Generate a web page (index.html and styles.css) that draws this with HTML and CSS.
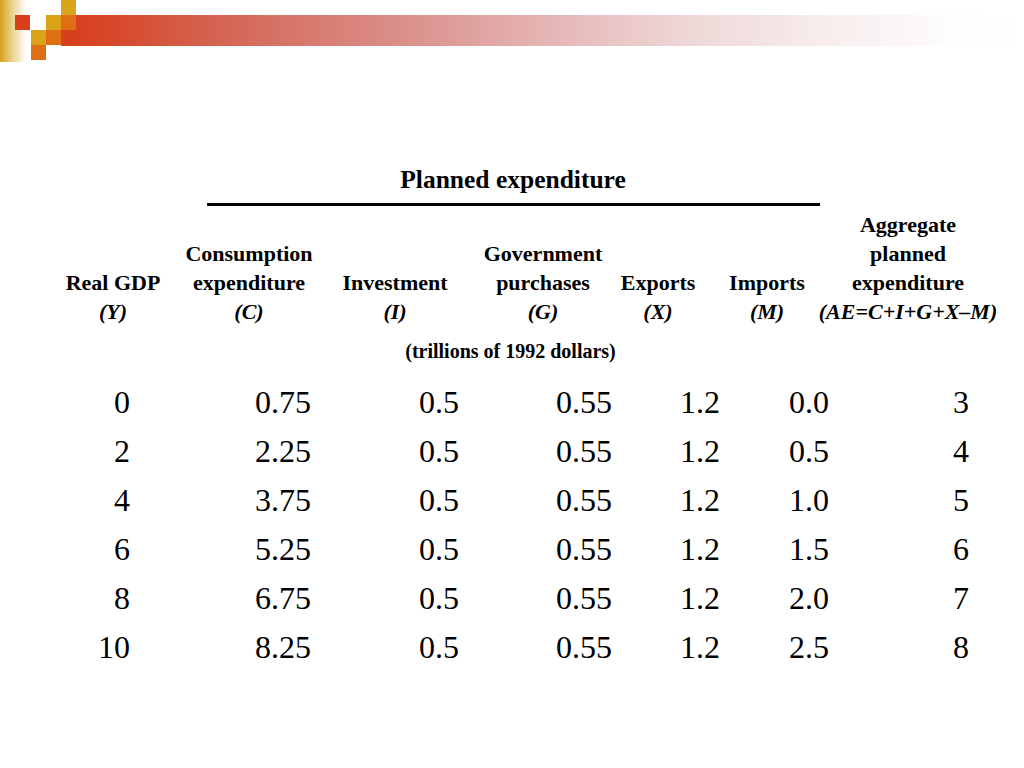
FILE: index.html
```html
<!DOCTYPE html>
<html lang="en">
<head>
<meta charset="utf-8">
<title>Planned expenditure</title>
<link rel="stylesheet" href="styles.css">
</head>
<body>
<header class="deco">
  <svg class="logo" width="76" height="62" viewBox="0 0 76 62" aria-hidden="true">
    <defs>
      <linearGradient id="goldfade" x1="0" y1="0" x2="1" y2="0">
        <stop offset="0" stop-color="#d6a01c"/>
        <stop offset="0.45" stop-color="#e9cf8a"/>
        <stop offset="1" stop-color="#ffffff"/>
      </linearGradient>
    </defs>
    <rect x="0" y="0" width="26" height="62" fill="url(#goldfade)"/>
    <rect x="15" y="15" width="15" height="15" fill="#d8401c"/>
    <rect x="61" y="0" width="15" height="15" fill="#d9a31a"/>
    <rect x="46" y="15" width="15" height="15" fill="#d9a31a"/>
    <rect x="61" y="15" width="15" height="15" fill="#e06e14"/>
    <rect x="31" y="30" width="15" height="15" fill="#d9a31a"/>
    <rect x="46" y="30" width="15" height="15" fill="#e06e14"/>
    <rect x="61" y="30" width="15" height="16" fill="#d6401e"/>
    <rect x="31" y="45" width="15" height="15" fill="#e06e14"/>
  </svg>
  <div class="band"></div>
</header>

<main class="slide">
  <div class="title">Planned expenditure</div>
  <div class="rule"></div>

  <div class="heads">
    <div class="hcell"><span>Real GDP</span><span class="sym">(Y)</span></div>
    <div class="hcell"><span>Consumption</span><span>expenditure</span><span class="sym">(C)</span></div>
    <div class="hcell"><span>Investment</span><span class="sym">(I)</span></div>
    <div class="hcell"><span>Government</span><span>purchases</span><span class="sym">(G)</span></div>
    <div class="hcell"><span>Exports</span><span class="sym">(X)</span></div>
    <div class="hcell"><span>Imports</span><span class="sym">(M)</span></div>
    <div class="hcell"><span>Aggregate</span><span>planned</span><span>expenditure</span><span class="sym">(AE=C+I+G+X–M)</span></div>
  </div>

  <div class="units">(trillions of 1992 dollars)</div>

  <div class="nums">
    <span>0</span><span>0.75</span><span>0.5</span><span>0.55</span><span>1.2</span><span>0.0</span><span>3</span>
    <span>2</span><span>2.25</span><span>0.5</span><span>0.55</span><span>1.2</span><span>0.5</span><span>4</span>
    <span>4</span><span>3.75</span><span>0.5</span><span>0.55</span><span>1.2</span><span>1.0</span><span>5</span>
    <span>6</span><span>5.25</span><span>0.5</span><span>0.55</span><span>1.2</span><span>1.5</span><span>6</span>
    <span>8</span><span>6.75</span><span>0.5</span><span>0.55</span><span>1.2</span><span>2.0</span><span>7</span>
    <span>10</span><span>8.25</span><span>0.5</span><span>0.55</span><span>1.2</span><span>2.5</span><span>8</span>
  </div>
</main>
</body>
</html>
```

FILE: styles.css
```css
html, body {
  margin: 0;
  padding: 0;
  background: #ffffff;
}

body {
  width: 1024px;
  height: 768px;
  overflow: hidden;
  font-family: "Liberation Serif", "Times New Roman", serif;
  color: #000;
}

.deco {
  display: flex;
  align-items: flex-start;
  height: 62px;
}

.logo {
  display: block;
  flex: none;
}

.band {
  flex: 1;
  margin-top: 15px;
  height: 31px;
  background: linear-gradient(to right,
    #d6401e 0%,
    #d4624f 14%,
    #d98a84 32%,
    #e3b1b0 48%,
    #eed6d6 64%,
    #f8eeee 80%,
    #fefcfc 92%,
    #ffffff 100%);
}

.slide {
  display: flex;
  flex-direction: column;
}

.title {
  margin-top: 103px;
  text-align: center;
  font-weight: bold;
  font-size: 25.5px;
  line-height: 30px;
  padding-left: 2px;
}

.rule {
  margin: 8px 0 0 207px;
  width: 613px;
  height: 3px;
  background: #000;
}

.heads {
  margin: 4px 0 0 45px;
  display: grid;
  grid-template-columns: 136px 136px 156px 140px 90px 128px 154px;
  align-items: end;
  font-weight: bold;
  font-size: 22px;
  line-height: 29px;
}

.hcell {
  display: flex;
  flex-direction: column;
  align-items: center;
  white-space: nowrap;
}

.sym {
  font-style: italic;
}

.units {
  margin-top: 13px;
  text-align: center;
  font-weight: bold;
  font-size: 20px;
  line-height: 24px;
  padding-right: 3px;
}

.nums {
  margin: 15px 0 0 45px;
  display: grid;
  grid-template-columns: 85px 181px 148px 153px 108px 109px 140px;
  font-size: 32px;
  line-height: 49px;
  text-align: right;
}
```
